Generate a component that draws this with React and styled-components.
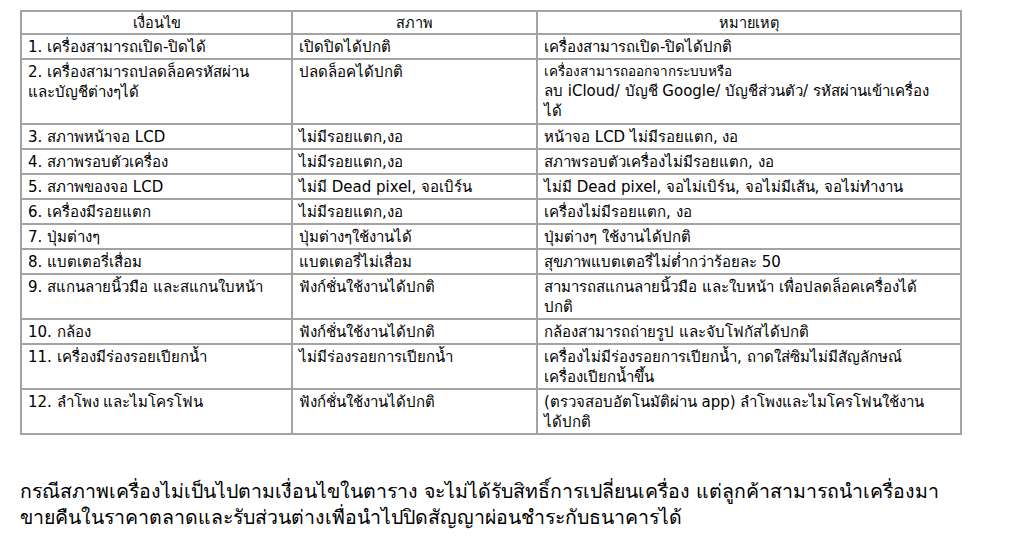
import React from 'react';
import styled, { createGlobalStyle } from 'styled-components';

// each cell is a list of lines, broken as in the printed form
const rows = [
  { cond: ['1. เครื่องสามารถเปิด-ปิดได้'], state: ['เปิดปิดได้ปกติ'], note: ['เครื่องสามารถเปิด-ปิดได้ปกติ'], lines: 1 },
  { cond: ['2. เครื่องสามารถปลดล็อครหัสผ่าน', 'และบัญชีต่างๆได้'], state: ['ปลดล็อคได้ปกติ'], note: ['ลบ iCloud/ บัญชี Google/ บัญชีส่วนตัว/ รหัสผ่านเข้าเครื่อง', 'ได้'], lead: 'เครื่องสามารถออกจากระบบหรือ', lines: 3 },
  { cond: ['3. สภาพหน้าจอ LCD'], state: ['ไม่มีรอยแตก,งอ'], note: ['หน้าจอ LCD ไม่มีรอยแตก, งอ'], lines: 1 },
  { cond: ['4. สภาพรอบตัวเครื่อง'], state: ['ไม่มีรอยแตก,งอ'], note: ['สภาพรอบตัวเครื่องไม่มีรอยแตก, งอ'], lines: 1 },
  { cond: ['5. สภาพของจอ LCD'], state: ['ไม่มี Dead pixel, จอเบิร์น'], note: ['ไม่มี Dead pixel, จอไม่เบิร์น, จอไม่มีเส้น, จอไม่ทำงาน'], lines: 1 },
  { cond: ['6. เครื่องมีรอยแตก'], state: ['ไม่มีรอยแตก,งอ'], note: ['เครื่องไม่มีรอยแตก, งอ'], lines: 1 },
  { cond: ['7. ปุ่มต่างๆ'], state: ['ปุ่มต่างๆใช้งานได้'], note: ['ปุ่มต่างๆ ใช้งานได้ปกติ'], lines: 1 },
  { cond: ['8. แบตเตอรี่เสื่อม'], state: ['แบตเตอรี่ไม่เสื่อม'], note: ['สุขภาพแบตเตอรี่ไม่ต่ำกว่าร้อยละ 50'], lines: 1 },
  { cond: ['9. สแกนลายนิ้วมือ และสแกนใบหน้า'], state: ['ฟังก์ชั่นใช้งานได้ปกติ'], note: ['สามารถสแกนลายนิ้วมือ และใบหน้า เพื่อปลดล็อคเครื่องได้', 'ปกติ'], lines: 2 },
  { cond: ['10. กล้อง'], state: ['ฟังก์ชั่นใช้งานได้ปกติ'], note: ['กล้องสามารถถ่ายรูป และจับโฟกัสได้ปกติ'], lines: 1 },
  { cond: ['11. เครื่องมีร่องรอยเปียกน้ำ'], state: ['ไม่มีร่องรอยการเปียกน้ำ'], note: ['เครื่องไม่มีร่องรอยการเปียกน้ำ, ถาดใส่ซิมไม่มีสัญลักษณ์', 'เครื่องเปียกน้ำขึ้น'], lines: 2 },
  { cond: ['12. ลำโพง และไมโครโฟน'], state: ['ฟังก์ชั่นใช้งานได้ปกติ'], note: ['(ตรวจสอบอัตโนมัติผ่าน app) ลำโพงและไมโครโฟนใช้งาน', 'ได้ปกติ'], lines: 2 },
];

const GlobalStyle = createGlobalStyle`
  html, body {
    margin: 0;
    padding: 0;
    background: #fff;
  }
  body {
    font-family: Tahoma, "DejaVu Sans", "Noto Sans", sans-serif;
    color: #000;
  }
`;

const Page = styled.div`
  width: 1020px;
  height: 548px;
  padding: 10px 0 0 20px;
  box-sizing: border-box;
  overflow: hidden;
`;

const Table = styled.table`
  width: 940px;
  border-collapse: collapse;
  table-layout: fixed;
  border: 2px solid #a3a3a3;
`;

const HeadCell = styled.th`
  border: 2px solid #a3a3a3;
  font-weight: normal;
  font-size: 14.5px;
  line-height: 20px;
  height: 19px;
  padding: 1px 6px 0;
  text-align: center;
  vertical-align: top;
`;

const Cell = styled.td`
  border: 2px solid #a3a3a3;
  font-size: 15px;
  line-height: 20px;
  padding: 2px 6px 0;
  vertical-align: top;
  white-space: nowrap;
  overflow: hidden;
  height: ${p => p.$lines * 20 + 1}px;
`;

const Line = styled.div`
  font-size: ${p => (p.$small ? '13.5px' : 'inherit')};
  line-height: ${p => (p.$small ? '19px' : '20px')};
`;

const Footer = styled.div`
  margin-top: 44px;
  font-size: 19.5px;
  white-space: nowrap;
`;

const FooterLine = styled.div`
  line-height: 26px;
`;

const Lines = ({ items }) => items.map((t, i) => <Line key={i}>{t}</Line>);

export default function App() {
  return (
    <Page>
      <GlobalStyle />
      <Table>
        <colgroup>
          <col style={{ width: 271 }} />
          <col style={{ width: 245 }} />
          <col style={{ width: 424 }} />
        </colgroup>
        <thead>
          <tr>
            <HeadCell>เงื่อนไข</HeadCell>
            <HeadCell>สภาพ</HeadCell>
            <HeadCell>หมายเหตุ</HeadCell>
          </tr>
        </thead>
        <tbody>
          {rows.map((r, i) => (
            <tr key={i}>
              <Cell $lines={r.lines}><Lines items={r.cond} /></Cell>
              <Cell $lines={r.lines}><Lines items={r.state} /></Cell>
              <Cell $lines={r.lines}>
                {r.lead && <Line $small>{r.lead}</Line>}
                <Lines items={r.note} />
              </Cell>
            </tr>
          ))}
        </tbody>
      </Table>
      <Footer>
        <FooterLine>กรณีสภาพเครื่องไม่เป็นไปตามเงื่อนไขในตาราง จะไม่ได้รับสิทธิ์การเปลี่ยนเครื่อง แต่ลูกค้าสามารถนำเครื่องมา</FooterLine>
        <FooterLine>ขายคืนในราคาตลาดและรับส่วนต่างเพื่อนำไปปิดสัญญาผ่อนชำระกับธนาคารได้</FooterLine>
      </Footer>
    </Page>
  );
}
